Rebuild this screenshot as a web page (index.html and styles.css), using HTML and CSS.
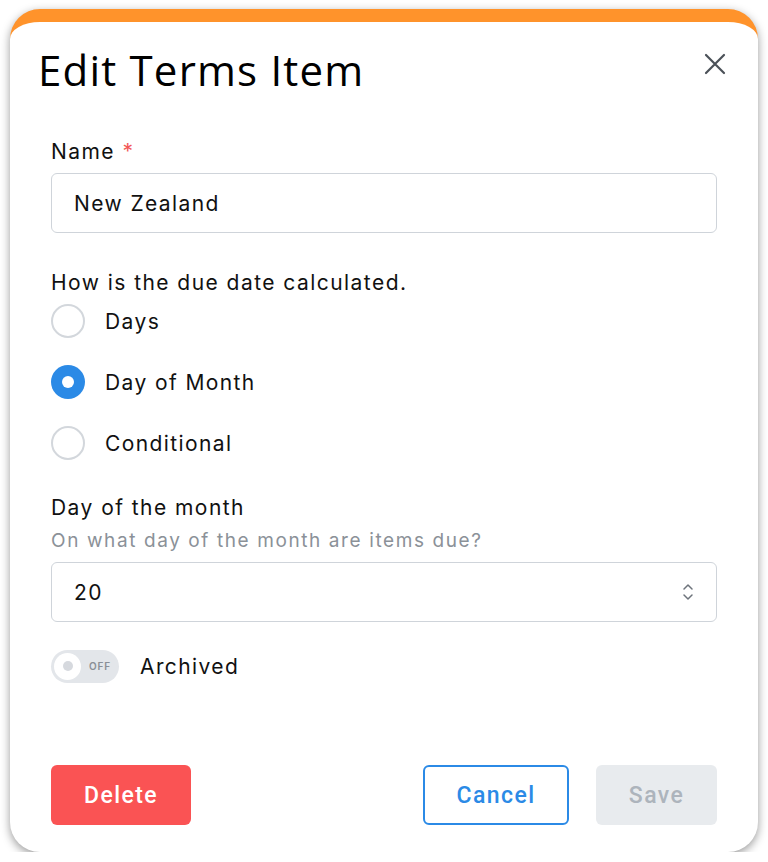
FILE: index.html
```html
<!DOCTYPE html>
<html lang="en">
<head>
<meta charset="utf-8">
<title>Edit Terms Item</title>
<link rel="stylesheet" href="styles.css">
</head>
<body>
<div class="modal">
  <div class="modal-header">
    <h1 class="modal-title">Edit Terms Item</h1>
    <button class="close-btn" aria-label="Close">
      <svg width="22" height="22" viewBox="0 0 22 22"><path d="M2 2L20 20M20 2L2 20" stroke="#4b5158" stroke-width="2.2" stroke-linecap="round" fill="none"/></svg>
    </button>
  </div>
  <div class="modal-body">
    <label class="field-label label-name">Name <span class="req">*</span></label>
    <div class="input">New Zealand</div>

    <div class="field-label label-how">How is the due date calculated.</div>
    <div class="radio-group">
      <div class="radio-row"><span class="radio"></span><span class="radio-text">Days</span></div>
      <div class="radio-row"><span class="radio checked"></span><span class="radio-text">Day of Month</span></div>
      <div class="radio-row"><span class="radio"></span><span class="radio-text">Conditional</span></div>
    </div>

    <div class="field-label label-day">Day of the month</div>
    <div class="hint">On what day of the month are items due?</div>
    <div class="input select">
      <span>20</span>
      <svg class="chev" width="14" height="20" viewBox="0 0 14 20"><path d="M3 7L7 3L11 7M3 13L7 17L11 13" stroke="#6d737b" stroke-width="1.5" fill="none" stroke-linecap="round" stroke-linejoin="round"/></svg>
    </div>

    <div class="toggle-row">
      <span class="toggle"><span class="knob"><span class="dot"></span></span><span class="off">OFF</span></span>
      <span class="toggle-text">Archived</span>
    </div>
  </div>
  <div class="modal-footer">
    <button class="btn btn-delete">Delete</button>
    <div class="right-btns">
      <button class="btn btn-cancel">Cancel</button>
      <button class="btn btn-save">Save</button>
    </div>
  </div>
</div>
</body>
</html>
```

FILE: styles.css
```css
* { box-sizing: border-box; }
html, body { margin: 0; background: #ffffff; }
body {
  padding: 9px 10px 0 10px;
  font-family: "Inter", "Roboto", sans-serif;
  color: #111;
}
.modal {
  width: 748px;
  height: 843px;
  background: #fff;
  border-top: 13px solid #ff932b;
  border-radius: 30px;
  box-shadow: 0 3px 10px rgba(0,0,0,0.4);
  display: flex;
  flex-direction: column;
  padding: 0 41px 27px 41px;
}
.modal-header {
  display: flex;
  justify-content: space-between;
  align-items: flex-start;
  padding-top: 24px;
  margin-left: -13px;
}
.modal-title {
  margin: 0;
  font-family: "Open Sans", sans-serif;
  font-weight: 400;
  font-size: 42px;
  line-height: 48px;
  letter-spacing: 1.2px;
  color: #000;
}
.close-btn {
  background: none;
  border: 0;
  padding: 0;
  margin: 7px -9px 0 0;
  width: 22px;
  height: 22px;
  display: flex;
}
.modal-body {
  display: flex;
  flex-direction: column;
}
.field-label {
  font-size: 21px;
  line-height: 24px;
  letter-spacing: 1.45px;
  color: #111;
}
.label-name { margin-top: 46px; }
.req { color: #f25757; }
.input {
  margin-top: 9px;
  height: 60px;
  border: 1.5px solid #cfd4da;
  border-radius: 6px;
  padding: 0 22px;
  display: flex;
  align-items: center;
  font-size: 21px;
  letter-spacing: 1.4px;
  color: #111;
}
.label-how { margin-top: 38px; }
.radio-group {
  margin-top: 9px;
  display: flex;
  flex-direction: column;
  gap: 27px;
}
.radio-row {
  display: flex;
  align-items: center;
  height: 34px;
}
.radio {
  width: 34px;
  height: 34px;
  border-radius: 50%;
  border: 2px solid #d3d7dc;
  background: #fff;
  flex: none;
}
.radio.checked {
  border: 0;
  background: #2b8ae6;
  display: flex;
  align-items: center;
  justify-content: center;
}
.radio.checked::after {
  content: "";
  width: 12px;
  height: 12px;
  border-radius: 50%;
  background: #fff;
}
.radio-text {
  margin-left: 20px;
  font-size: 21px;
  letter-spacing: 1.4px;
}
.label-day { margin-top: 36px; }
.hint {
  margin-top: 9px;
  font-size: 19px;
  line-height: 24px;
  letter-spacing: 1.6px;
  color: #8b9198;
}
.select {
  justify-content: space-between;
  padding-right: 22px;
}
.chev { margin-right: -1px; }
.toggle-row {
  margin-top: 27px;
  display: flex;
  align-items: center;
  height: 34px;
}
.toggle {
  width: 68px;
  height: 33px;
  border-radius: 17px;
  background: #e3e6ea;
  display: flex;
  align-items: center;
  padding-left: 3px;
}
.knob {
  width: 27px;
  height: 27px;
  border-radius: 50%;
  background: #fff;
  display: flex;
  align-items: center;
  justify-content: center;
}
.dot {
  width: 10px;
  height: 10px;
  border-radius: 50%;
  background: #d6d9de;
}
.off {
  margin-left: 8px;
  font-size: 10px;
  font-weight: 600;
  letter-spacing: 0.8px;
  color: #8a8f96;
}
.toggle-text {
  margin-left: 21px;
  font-size: 21px;
  letter-spacing: 1.4px;
}
.modal-footer {
  margin-top: auto;
  display: flex;
  justify-content: space-between;
  align-items: center;
}
.right-btns {
  display: flex;
  gap: 27px;
}
.btn {
  height: 60px;
  border-radius: 6px;
  font-family: "Roboto", sans-serif;
  font-weight: 500;
  font-size: 23px;
  letter-spacing: 1.4px;
  border: 0;
  padding: 0;
}
.btn-delete {
  width: 140px;
  background: #fa5354;
  color: #fff;
}
.btn-cancel {
  width: 146px;
  background: #fff;
  border: 2px solid #2b8ae6;
  color: #2b8ae6;
}
.btn-save {
  width: 121px;
  background: #e8ebee;
  color: #adb4bc;
}
```
